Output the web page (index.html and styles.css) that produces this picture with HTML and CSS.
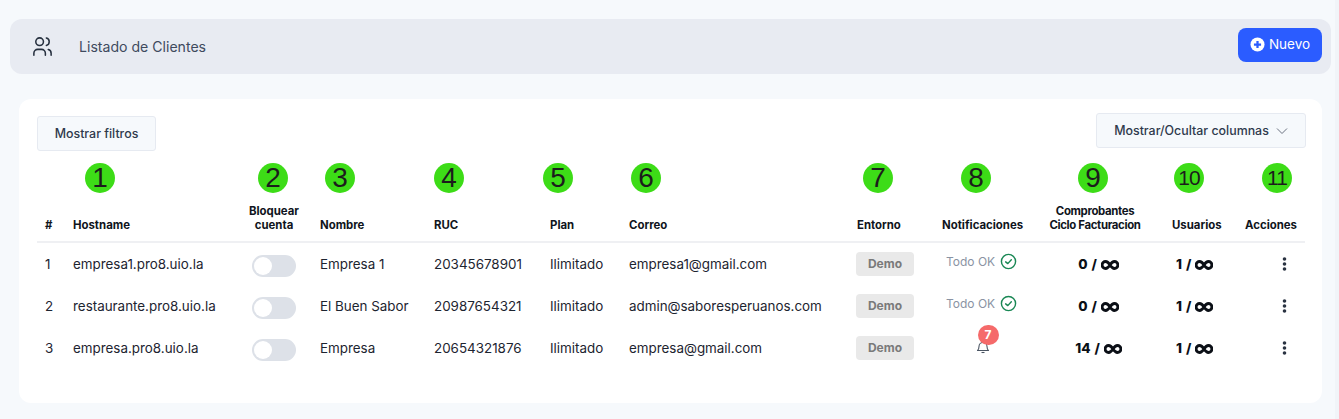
FILE: index.html
```html
<!DOCTYPE html>
<html lang="es">
<head>
<meta charset="utf-8">
<title>Listado de Clientes</title>
<link rel="stylesheet" href="styles.css">
</head>
<body>
<div class="page">
  <header class="topbar">
    <div class="topbar-title">
      <svg class="users-icon" viewBox="0 0 24 24" fill="none" stroke="currentColor" stroke-width="2" stroke-linecap="round" stroke-linejoin="round"><circle cx="9" cy="7" r="4"/><path d="M3 21v-2a4 4 0 0 1 4-4h4a4 4 0 0 1 4 4v2"/><path d="M16 3.13a4 4 0 0 1 0 7.75"/><path d="M21 21v-2a4 4 0 0 0-3-3.85"/></svg>
      <span>Listado de Clientes</span>
    </div>
    <button class="btn-new">
      <svg class="plus-icon" viewBox="0 0 16 16"><circle cx="8" cy="8" r="7.500" fill="#fff"/><path d="M8 4.200v7.600M4.200 8h7.600" stroke="#2b5cff" stroke-width="2.400"/></svg>
      <span>Nuevo</span>
    </button>
  </header>

  <main class="card">
    <div class="toolbar">
      <button class="btn-light btn-filter">Mostrar filtros</button>
      <button class="btn-light btn-cols">Mostrar/Ocultar columnas
        <svg class="chev" viewBox="0 0 12 12" fill="none" stroke="currentColor" stroke-width="1"><path d="M1 3.500l5 5 5-5"/></svg>
      </button>
    </div>

    <div class="table-wrap">
      <div class="markers">
        <span class="marker m1">1</span><span class="marker m2">2</span><span class="marker m3">3</span>
        <span class="marker m4">4</span><span class="marker m5">5</span><span class="marker m6">6</span>
        <span class="marker m7">7</span><span class="marker m8">8</span><span class="marker m9">9</span>
        <span class="marker m10 small">10</span><span class="marker m11 small">11</span>
      </div>
      <table>
        <colgroup>
          <col class="c-num"><col class="c-host"><col class="c-block"><col class="c-name"><col class="c-ruc"><col class="c-plan"><col class="c-mail"><col class="c-env"><col class="c-notif"><col class="c-comp"><col class="c-users"><col class="c-act">
        </colgroup>
        <thead>
          <tr>
            <th>#</th><th>Hostname</th><th class="center">Bloquear<br>cuenta</th><th>Nombre</th><th>RUC</th><th>Plan</th><th>Correo</th><th>Entorno</th><th>Notificaciones</th><th class="center th-comp">Comprobantes<br>Ciclo Facturacion</th><th>Usuarios</th><th>Acciones</th>
          </tr>
        </thead>
        <tbody>
          <tr>
            <td>1</td><td>empresa1.pro8.uio.la</td><td class="center"><span class="toggle"></span></td><td>Empresa 1</td><td>20345678901</td><td>Ilimitado</td><td>empresa1@gmail.com</td>
            <td><span class="badge">Demo</span></td>
            <td><span class="ok">Todo OK <svg class="check" viewBox="0 0 24 24" fill="none" stroke="#198754" stroke-width="2" stroke-linecap="round" stroke-linejoin="round"><circle cx="12" cy="12" r="10"/><path d="M8 12.500l3 2.500 5-5.500"/></svg></span></td>
            <td class="center count">0 / <svg class="inf" viewBox="0 0 18 10" fill="none" stroke="currentColor" stroke-width="2.800"><path d="M9 5C7.500 2.600 6.300 1.500 4.600 1.500a3.500 3.500 0 0 0 0 7C6.300 8.500 7.500 7.400 9 5c1.500-2.400 2.700-3.500 4.400-3.500a3.500 3.500 0 0 1 0 7C11.700 8.500 10.500 7.400 9 5z"/></svg></td>
            <td class="count users">1 / <svg class="inf" viewBox="0 0 18 10" fill="none" stroke="currentColor" stroke-width="2.800"><path d="M9 5C7.500 2.600 6.300 1.500 4.600 1.500a3.500 3.500 0 0 0 0 7C6.300 8.500 7.500 7.400 9 5c1.500-2.400 2.700-3.500 4.400-3.500a3.500 3.500 0 0 1 0 7C11.700 8.500 10.500 7.400 9 5z"/></svg></td>
            <td class="actions"><svg class="dots" viewBox="0 0 4 14"><circle cx="2" cy="2" r="1.800"/><circle cx="2" cy="7" r="1.800"/><circle cx="2" cy="12" r="1.800"/></svg></td>
          </tr>
          <tr>
            <td>2</td><td>restaurante.pro8.uio.la</td><td class="center"><span class="toggle"></span></td><td>El Buen Sabor</td><td>20987654321</td><td>Ilimitado</td><td>admin@saboresperuanos.com</td>
            <td><span class="badge">Demo</span></td>
            <td><span class="ok">Todo OK <svg class="check" viewBox="0 0 24 24" fill="none" stroke="#198754" stroke-width="2" stroke-linecap="round" stroke-linejoin="round"><circle cx="12" cy="12" r="10"/><path d="M8 12.500l3 2.500 5-5.500"/></svg></span></td>
            <td class="center count">0 / <svg class="inf" viewBox="0 0 18 10" fill="none" stroke="currentColor" stroke-width="2.800"><path d="M9 5C7.500 2.600 6.300 1.500 4.600 1.500a3.500 3.500 0 0 0 0 7C6.300 8.500 7.500 7.400 9 5c1.500-2.400 2.700-3.500 4.400-3.500a3.500 3.500 0 0 1 0 7C11.700 8.500 10.500 7.400 9 5z"/></svg></td>
            <td class="count users">1 / <svg class="inf" viewBox="0 0 18 10" fill="none" stroke="currentColor" stroke-width="2.800"><path d="M9 5C7.500 2.600 6.300 1.500 4.600 1.500a3.500 3.500 0 0 0 0 7C6.300 8.500 7.500 7.400 9 5c1.500-2.400 2.700-3.500 4.400-3.500a3.500 3.500 0 0 1 0 7C11.700 8.500 10.500 7.400 9 5z"/></svg></td>
            <td class="actions"><svg class="dots" viewBox="0 0 4 14"><circle cx="2" cy="2" r="1.800"/><circle cx="2" cy="7" r="1.800"/><circle cx="2" cy="12" r="1.800"/></svg></td>
          </tr>
          <tr>
            <td>3</td><td>empresa.pro8.uio.la</td><td class="center"><span class="toggle"></span></td><td>Empresa</td><td>20654321876</td><td>Ilimitado</td><td>empresa@gmail.com</td>
            <td><span class="badge">Demo</span></td>
            <td class="center"><span class="bell-wrap"><svg class="bell" viewBox="0 0 14 14" fill="none" stroke="#4b5563" stroke-width="1.100" stroke-linejoin="round"><path d="M1.500 10.500c1-1 1.500-2 1.500-4a4 4 0 0 1 8 0c0 2 .5 3 1.500 4z"/><path d="M5.500 12.500h3"/></svg><span class="bell-count">7</span></span></td>
            <td class="center count">14 / <svg class="inf" viewBox="0 0 18 10" fill="none" stroke="currentColor" stroke-width="2.800"><path d="M9 5C7.500 2.600 6.300 1.500 4.600 1.500a3.500 3.500 0 0 0 0 7C6.300 8.500 7.500 7.400 9 5c1.500-2.400 2.700-3.500 4.400-3.500a3.500 3.500 0 0 1 0 7C11.700 8.500 10.500 7.400 9 5z"/></svg></td>
            <td class="count users">1 / <svg class="inf" viewBox="0 0 18 10" fill="none" stroke="currentColor" stroke-width="2.800"><path d="M9 5C7.500 2.600 6.300 1.500 4.600 1.500a3.500 3.500 0 0 0 0 7C6.300 8.500 7.500 7.400 9 5c1.500-2.400 2.700-3.500 4.400-3.500a3.500 3.500 0 0 1 0 7C11.700 8.500 10.500 7.400 9 5z"/></svg></td>
            <td class="actions"><svg class="dots" viewBox="0 0 4 14"><circle cx="2" cy="2" r="1.800"/><circle cx="2" cy="7" r="1.800"/><circle cx="2" cy="12" r="1.800"/></svg></td>
          </tr>
        </tbody>
      </table>
    </div>
  </main>
</div>
</body>
</html>
```
FILE: styles.css
```css
* { box-sizing: border-box; }
html, body { margin: 0; height: 100%; overflow: hidden; }
body {
  background: #f6f9fc;
  font-family: "Inter", "Liberation Sans", sans-serif;
  font-size: 13px;
  color: #1f2937;
}
body::after {
  content: "";
  position: fixed;
  top: 0;
  right: 0;
  bottom: 0;
  width: 4px;
  background: #f1f4f8;
}
.page { padding: 19px 8px 0 10px; width: 1339px; }
.topbar {
  height: 55px;
  background: #e8ebf2;
  border-radius: 12px;
  display: flex;
  align-items: center;
  justify-content: space-between;
  padding: 0 9px 0 21px;
}
.topbar-title { display: flex; align-items: center; gap: 25px; font-size: 14.100px; color: #3e4a5e; }
.users-icon { width: 23px; height: 23px; color: #26303f; stroke-width: 1.6; }
.btn-new {
  height: 34px;
  width: 84px;
  margin-top: -3px;
  padding: 0 0 2px;
  border: 0;
  border-radius: 8px;
  background: #2b5cff;
  color: #fff;
  font: 400 13.500px "Inter", sans-serif;
  display: flex;
  align-items: center;
  justify-content: center;
  gap: 4px;
}
.plus-icon { width: 15px; height: 15px; }
.card {
  margin: 25px 9px 0 9px;
  height: 304px;
  background: #fff;
  border-radius: 12px;
  padding: 14px 16px 0 18px;
}
.toolbar { display: flex; justify-content: space-between; align-items: flex-start; height: 50px; }
.btn-light {
  height: 35px;
  background: #f6f9fc;
  border: 1px solid #e6eaf1;
  border-radius: 3px;
  color: #2f3a4c;
  font: 500 12.400px "Inter", sans-serif;
  display: flex;
  align-items: center;
  justify-content: center;
}
.btn-filter { width: 119px; margin-top: 3px; }
.btn-cols { width: 210px; gap: 7px; }
.chev { width: 12px; height: 12px; color: #6b7280; }
.table-wrap { position: relative; }
.markers { position: absolute; inset: 0; pointer-events: none; }
.marker {
  position: absolute;
  top: 0;
  width: 30px;
  height: 30px;
  border-radius: 50%;
  background: #3ddc17;
  color: #1c1c1c;
  font: 28px/30px "Liberation Sans", sans-serif;
  text-align: center;
}
.marker.small { font-size: 21px; letter-spacing: -1px; }
.m1 { left: 48px; } .m2 { left: 221px; } .m3 { left: 288px; } .m4 { left: 397px; }
.m5 { left: 506px; } .m6 { left: 594px; } .m7 { left: 826px; } .m8 { left: 924px; }
.m9 { left: 1041px; } .m10 { left: 1137px; } .m11 { left: 1225px; }
table { width: 1268px; border-collapse: separate; border-spacing: 0; table-layout: fixed; }
.c-num { width: 28px; } .c-host { width: 171px; } .c-block { width: 76px; } .c-name { width: 114px; }
.c-ruc { width: 116px; } .c-plan { width: 79px; } .c-mail { width: 228px; } .c-env { width: 85px; }
.c-notif { width: 99px; } .c-comp { width: 131px; } .c-users { width: 73px; } .c-act { width: 68px; }
thead th {
  height: 80px;
  padding: 0 8px 9px;
  vertical-align: bottom;
  text-align: left;
  font-size: 11.400px;
  line-height: 14px;
  font-weight: 700;
  color: #0f1420;
  border-bottom: 2px solid #eff0f3;
  white-space: nowrap;
}
.th-comp { letter-spacing: -0.350px; padding-right: 15px; }
tbody td {
  height: 42px;
  padding: 0 8px;
  font-size: 13.400px;
  color: #1d2430;
  white-space: nowrap;
}
th.center, td.center { text-align: center; }
.toggle {
  display: inline-block;
  vertical-align: -12px;
  width: 44px;
  height: 22px;
  border-radius: 11px;
  background: #dde1e8;
  position: relative;
}
.toggle::after {
  content: "";
  position: absolute;
  left: 2px;
  top: 2px;
  width: 18px;
  height: 18px;
  border-radius: 50%;
  background: #fff;
}
.badge {
  display: inline-block;
  width: 58px;
  height: 24px;
  margin-left: -1px;
  border-radius: 4px;
  background: #e9e9e9;
  color: #7a7a7a;
  font-size: 12px;
  font-weight: 700;
  line-height: 24px;
  text-align: center;
}
.ok { display: inline-flex; align-items: center; gap: 5px; font-size: 12px; color: #8a93a3; transform: translateY(-3px); margin-left: 4px; }
.check { width: 17px; height: 17px; }
td.count { font-size: 13.500px; font-weight: 800; color: #0b0f16; word-spacing: 1px; }
td.users { padding-left: 12px; }
.inf { width: 18px; height: 10px; vertical-align: -1px; }
td.actions { text-align: right; padding-right: 18px; }
.dots { width: 5px; height: 14px; fill: #2a3342; vertical-align: -2px; }
.bell-wrap { position: relative; display: inline-block; width: 14px; height: 14px; vertical-align: middle; top: -2px; margin-left: -2px; }
.bell { width: 14px; height: 14px; display: block; }
.bell-count {
  position: absolute;
  left: 2px;
  top: -15px;
  width: 21px;
  height: 20px;
  border-radius: 10px;
  background: #f56a6a;
  color: #fff;
  font-size: 12px;
  font-weight: 700;
  line-height: 20px;
  text-align: center;
}
```
